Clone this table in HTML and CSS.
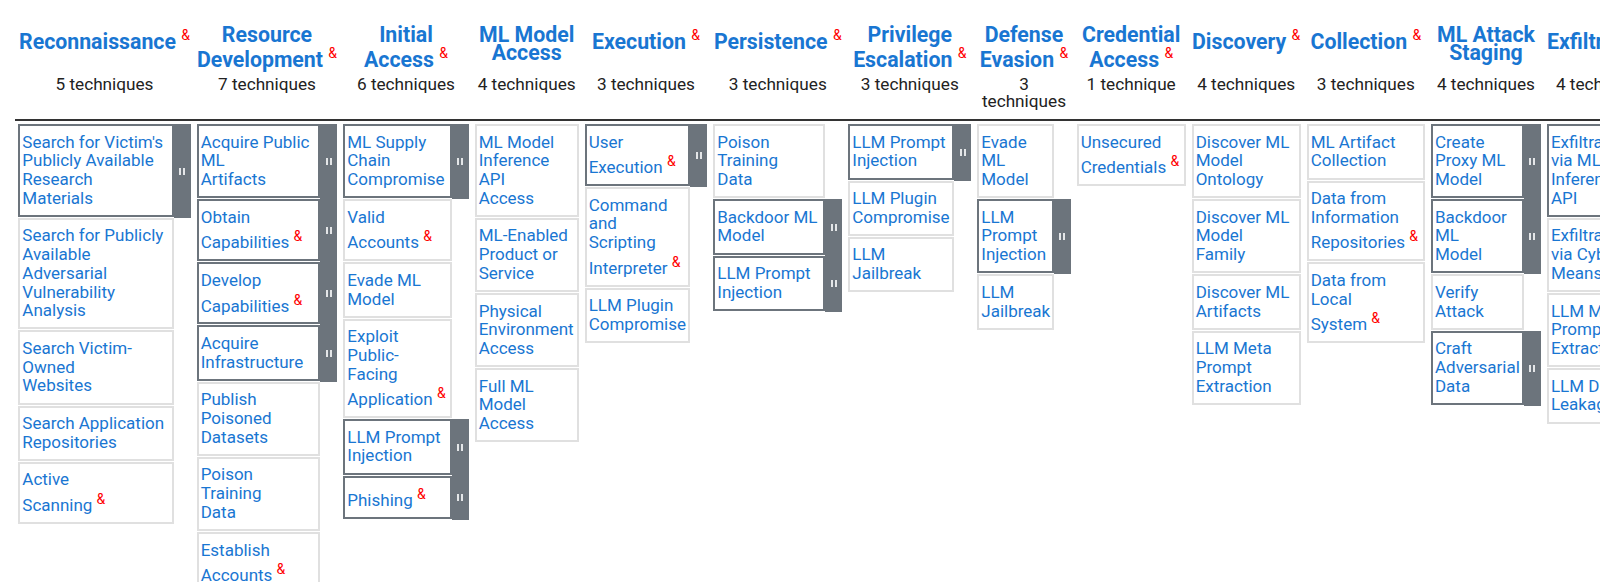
FILE: index.html
```html
<!DOCTYPE html>
<html lang="en">
<head>
<meta charset="utf-8">
<title>ATLAS Matrix</title>
<link rel="stylesheet" href="styles.css">
</head>
<body>
<div class="page">
  <div class="matrix">
    <div class="heads grid">
      <div class="title">Reconnaissance <sup>&amp;</sup></div>
      <div class="title">Resource<br>Development <sup>&amp;</sup></div>
      <div class="title">Initial<br>Access <sup>&amp;</sup></div>
      <div class="title">ML Model<br>Access</div>
      <div class="title">Execution <sup>&amp;</sup></div>
      <div class="title">Persistence <sup>&amp;</sup></div>
      <div class="title">Privilege<br>Escalation <sup>&amp;</sup></div>
      <div class="title">Defense<br>Evasion <sup>&amp;</sup></div>
      <div class="title">Credential<br>Access <sup>&amp;</sup></div>
      <div class="title">Discovery <sup>&amp;</sup></div>
      <div class="title">Collection <sup>&amp;</sup></div>
      <div class="title">ML Attack<br>Staging</div>
      <div class="title">Exfiltration <sup>&amp;</sup></div>

      <div class="count">5 techniques</div>
      <div class="count">7 techniques</div>
      <div class="count">6 techniques</div>
      <div class="count">4 techniques</div>
      <div class="count">3 techniques</div>
      <div class="count">3 techniques</div>
      <div class="count">3 techniques</div>
      <div class="count">3<br>techniques</div>
      <div class="count">1 technique</div>
      <div class="count">4 techniques</div>
      <div class="count">3 techniques</div>
      <div class="count">4 techniques</div>
      <div class="count">4 techniques</div>
    </div>

    <div class="rule"></div>

    <div class="cols grid">
      <div class="col has-sub">
        <div class="row sub"><a class="tech">Search for Victim's<br>Publicly Available<br>Research<br>Materials</a><span class="bar"><i></i></span></div>
        <div class="row"><a class="tech">Search for Publicly<br>Available<br>Adversarial<br>Vulnerability<br>Analysis</a></div>
        <div class="row"><a class="tech">Search Victim-<br>Owned<br>Websites</a></div>
        <div class="row"><a class="tech">Search Application<br>Repositories</a></div>
        <div class="row"><a class="tech">Active<br>Scanning <sup>&amp;</sup></a></div>
      </div>

      <div class="col has-sub">
        <div class="row sub"><a class="tech">Acquire Public<br>ML<br>Artifacts</a><span class="bar"><i></i></span></div>
        <div class="row sub"><a class="tech">Obtain<br>Capabilities <sup>&amp;</sup></a><span class="bar"><i></i></span></div>
        <div class="row sub"><a class="tech">Develop<br>Capabilities <sup>&amp;</sup></a><span class="bar"><i></i></span></div>
        <div class="row sub"><a class="tech">Acquire<br>Infrastructure</a><span class="bar"><i></i></span></div>
        <div class="row"><a class="tech">Publish<br>Poisoned<br>Datasets</a></div>
        <div class="row"><a class="tech">Poison<br>Training<br>Data</a></div>
        <div class="row"><a class="tech">Establish<br>Accounts <sup>&amp;</sup></a></div>
      </div>

      <div class="col has-sub">
        <div class="row sub"><a class="tech">ML Supply<br>Chain<br>Compromise</a><span class="bar"><i></i></span></div>
        <div class="row"><a class="tech">Valid<br>Accounts <sup>&amp;</sup></a></div>
        <div class="row"><a class="tech">Evade ML<br>Model</a></div>
        <div class="row"><a class="tech">Exploit<br>Public-<br>Facing<br>Application <sup>&amp;</sup></a></div>
        <div class="row sub"><a class="tech">LLM Prompt<br>Injection</a><span class="bar"><i></i></span></div>
        <div class="row sub"><a class="tech">Phishing <sup>&amp;</sup></a><span class="bar"><i></i></span></div>
      </div>

      <div class="col">
        <div class="row"><a class="tech">ML Model<br>Inference<br>API<br>Access</a></div>
        <div class="row"><a class="tech">ML-Enabled<br>Product or<br>Service</a></div>
        <div class="row"><a class="tech">Physical<br>Environment<br>Access</a></div>
        <div class="row"><a class="tech">Full ML<br>Model<br>Access</a></div>
      </div>

      <div class="col has-sub">
        <div class="row sub"><a class="tech">User<br>Execution <sup>&amp;</sup></a><span class="bar"><i></i></span></div>
        <div class="row"><a class="tech">Command<br>and<br>Scripting<br>Interpreter <sup>&amp;</sup></a></div>
        <div class="row"><a class="tech">LLM Plugin<br>Compromise</a></div>
      </div>

      <div class="col has-sub">
        <div class="row"><a class="tech">Poison<br>Training<br>Data</a></div>
        <div class="row sub"><a class="tech">Backdoor ML<br>Model</a><span class="bar"><i></i></span></div>
        <div class="row sub"><a class="tech">LLM Prompt<br>Injection</a><span class="bar"><i></i></span></div>
      </div>

      <div class="col has-sub">
        <div class="row sub"><a class="tech">LLM Prompt<br>Injection</a><span class="bar"><i></i></span></div>
        <div class="row"><a class="tech">LLM Plugin<br>Compromise</a></div>
        <div class="row"><a class="tech">LLM<br>Jailbreak</a></div>
      </div>

      <div class="col has-sub">
        <div class="row"><a class="tech">Evade<br>ML<br>Model</a></div>
        <div class="row sub"><a class="tech">LLM<br>Prompt<br>Injection</a><span class="bar"><i></i></span></div>
        <div class="row"><a class="tech">LLM<br>Jailbreak</a></div>
      </div>

      <div class="col">
        <div class="row"><a class="tech">Unsecured<br>Credentials <sup>&amp;</sup></a></div>
      </div>

      <div class="col">
        <div class="row"><a class="tech">Discover ML<br>Model<br>Ontology</a></div>
        <div class="row"><a class="tech">Discover ML<br>Model<br>Family</a></div>
        <div class="row"><a class="tech">Discover ML<br>Artifacts</a></div>
        <div class="row"><a class="tech">LLM Meta<br>Prompt<br>Extraction</a></div>
      </div>

      <div class="col">
        <div class="row"><a class="tech">ML Artifact<br>Collection</a></div>
        <div class="row"><a class="tech">Data from<br>Information<br>Repositories <sup>&amp;</sup></a></div>
        <div class="row"><a class="tech">Data from<br>Local<br>System <sup>&amp;</sup></a></div>
      </div>

      <div class="col has-sub">
        <div class="row sub"><a class="tech">Create<br>Proxy ML<br>Model</a><span class="bar"><i></i></span></div>
        <div class="row sub"><a class="tech">Backdoor<br>ML<br>Model</a><span class="bar"><i></i></span></div>
        <div class="row"><a class="tech">Verify<br>Attack</a></div>
        <div class="row sub"><a class="tech">Craft<br>Adversarial<br>Data</a><span class="bar"><i></i></span></div>
      </div>

      <div class="col has-sub">
        <div class="row sub"><a class="tech">Exfiltration<br>via ML<br>Inference<br>API</a><span class="bar"><i></i></span></div>
        <div class="row"><a class="tech">Exfiltration<br>via Cyber<br>Means</a></div>
        <div class="row"><a class="tech">LLM Meta<br>Prompt<br>Extraction</a></div>
        <div class="row"><a class="tech">LLM Data<br>Leakage</a></div>
      </div>
    </div>
  </div>
</div>
</body>
</html>
```

FILE: styles.css
```css
html, body {
  margin: 0;
  padding: 0;
  background: #ffffff;
  overflow: hidden;
}

body {
  font-family: Roboto, "Liberation Sans", Arial, sans-serif;
  color: #222222;
}

.page {
  width: 100vw;
  height: 100vh;
  overflow: hidden;
}

.matrix {
  padding: 26px 0 0 15px;
  width: 1800px;
}

.grid {
  display: grid;
  grid-template-columns: 172.4px 140.6px 125.4px 104px 122.6px 129px 123px 93.4px 109px 109px 118.3px 110px 116px;
  column-gap: 6px;
  margin-left: 3.3px;
}

.heads {
  row-gap: 7px;
  align-items: start;
}

.title {
  font-size: 21.3px;
  font-weight: 700;
  line-height: 18.3px;
  color: #1976d2;
  text-align: center;
  white-space: nowrap;
}

.title sup {
  font-size: 14px;
  font-weight: 400;
  color: #ff0000;
  vertical-align: 8.5px;
  line-height: 18.3px;
}

.count {
  font-size: 17.2px;
  line-height: 17px;
  text-align: center;
  white-space: nowrap;
  color: #222222;
}

.rule {
  margin-top: 9px;
  height: 2px;
  background: #333333;
}

.cols {
  margin-top: 3px;
  align-items: start;
}

.col {
  display: flex;
  flex-direction: column;
}

.row {
  display: flex;
  align-items: stretch;
}

.col.has-sub .row {
  padding-right: 17px;
}

.col.has-sub .row.sub {
  padding-right: 0;
}

.tech {
  flex: 1;
  min-width: 0;
  display: block;
  margin-bottom: 1px;
  border: 2px solid #e0e0e0;
  padding: 6.5px 2px 7.5px 2px;
  font-size: 17px;
  line-height: 18.7px;
  color: #1976d2;
  white-space: nowrap;
  overflow: hidden;
}

.row.sub .tech {
  border-color: #6c747c;
}

.tech sup {
  font-size: 14px;
  color: #ff0000;
  vertical-align: 6.7px;
  line-height: 20.5px;
}

.bar {
  width: 17px;
  flex: none;
  background: #6c747c;
  display: flex;
  align-items: center;
  justify-content: center;
}

.bar i {
  display: block;
  width: 2px;
  height: 7px;
  border-left: 2px solid #e4e6e8;
  border-right: 2px solid #e4e6e8;
}
```
